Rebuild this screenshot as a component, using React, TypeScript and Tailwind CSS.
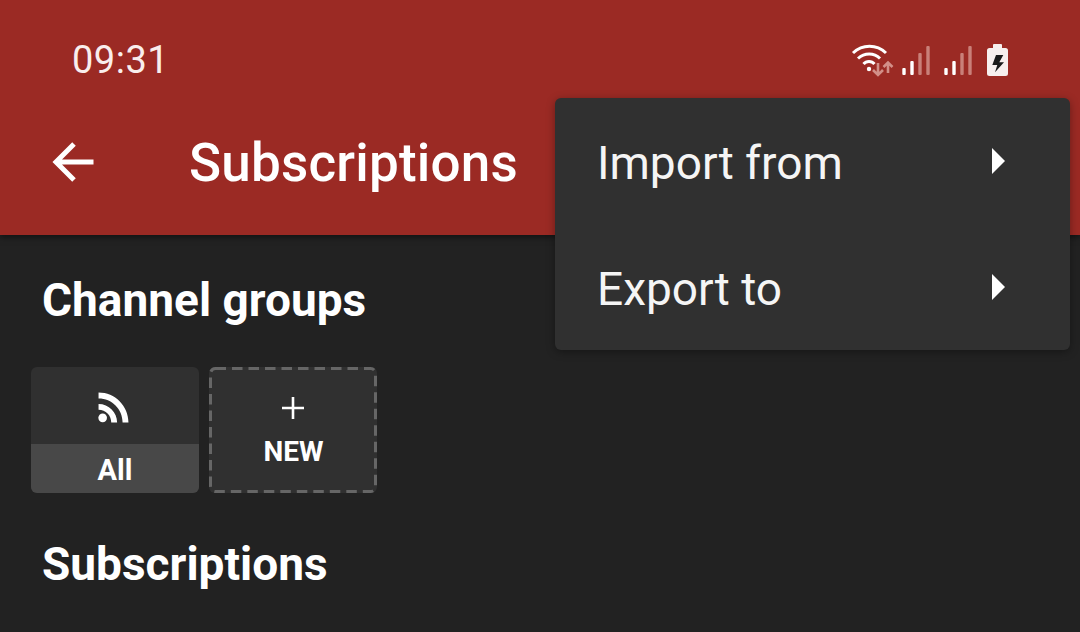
const font = "font-['Roboto',sans-serif]";

function BackArrow() {
  return (
    <svg width="44" height="42" viewBox="0 0 44 42" fill="none" stroke="#fff" strokeWidth="5">
      <path d="M42.500 20H5M23 2 5 20l18 18" />
    </svg>
  );
}

function StatusIcons() {
  return (
    <svg width="160" height="40" viewBox="0 0 160 40" fill="none">
      {/* wifi */}
      <g stroke="#fff" strokeWidth="3" fill="none">
        <path d="M3 14C12.500 5 26.500 5 36 14" />
        <path d="M8 19.500C14.500 13.500 24 13.500 30 19.500" />
        <path d="M13.500 25C16.500 21.500 21.500 21.500 24.500 25" />
      </g>
      <circle cx="19" cy="30" r="2.200" fill="#fff" />
      {/* data arrows */}
      <g stroke="#d28f88" strokeWidth="2.600" fill="none">
        <path d="M28 24v12M23 31l5 5 5-5" />
        <path d="M38 34V23.500M33.500 28l4.500-4.500 4.500 4.500" />
      </g>
      {/* signal 1 */}
      <rect x="52.300" y="29" width="3.400" height="7" rx="1" fill="#fff" />
      <rect x="60.300" y="22" width="3.400" height="14" rx="1" fill="#fff" />
      <rect x="68.300" y="14" width="3.400" height="22" rx="1" fill="#c98079" />
      <rect x="76.300" y="7" width="3.400" height="29" rx="1" fill="#c98079" />
      {/* signal 2 */}
      <rect x="94.300" y="29" width="3.400" height="7" rx="1" fill="#fff" />
      <rect x="102.300" y="22" width="3.400" height="14" rx="1" fill="#fff" />
      <rect x="110.300" y="14" width="3.400" height="22" rx="1" fill="#c98079" />
      <rect x="118.300" y="7" width="3.400" height="29" rx="1" fill="#c98079" />
      {/* battery */}
      <path d="M144 5h7a1 1 0 0 1 1 1v3h3.500a2.500 2.500 0 0 1 2.500 2.500V34.500a2.500 2.500 0 0 1-2.500 2.500h-16a2.500 2.500 0 0 1-2.500-2.500V11.500a2.500 2.500 0 0 1 2.500-2.500h3.500V6a1 1 0 0 1 1-1z" fill="#f7efee" />
      <path d="M146 16h7.300l-4 7.300H154L145 33.300l2.300-7.300h-5z" fill="#1a1a1a" />
    </svg>
  );
}

function Rss() {
  return (
    <svg width="33" height="33" viewBox="0 0 32 32" fill="#fff">
      <circle cx="5.500" cy="26" r="4.200" />
      <path d="M1.500 12.500v5.600c7 0 12.300 5.400 12.300 12.400h5.700c0-10-8-18-18-18z" />
      <path d="M1.500 1.500v5.700c13 0 23.300 10.300 23.300 23.300h5.700C30.500 14.500 17.500 1.500 1.500 1.500z" />
    </svg>
  );
}

function MenuItem({ label }: { label: string }) {
  return (
    <div className="flex h-[126px] items-center justify-between pl-[42px] pr-[65px]">
      <span className="pt-1 text-[46px] leading-none text-[#f5f5f5]">{label}</span>
      <span className="h-0 w-0 border-y-[13px] border-l-[13px] border-y-transparent border-l-white" />
    </div>
  );
}

export default function App() {
  return (
    <div className={`relative h-[632px] w-[1080px] overflow-hidden bg-[#222222] ${font}`}>
      <header className="h-[235px] bg-[#9b2a24] text-white shadow-[0_2px_6px_rgba(0,0,0,0.5)]">
        <div className="flex h-[98px] items-center justify-between pl-[72px] pr-[70px] pt-5">
          <span className="pt-[2px] text-[38px] leading-none tracking-[0.5px] text-[#f9eeed]">09:31</span>
          <StatusIcons />
        </div>
        <div className="flex h-[137px] items-center pb-[7px] pl-[51px]">
          <BackArrow />
          <h1 className="ml-[94px] text-[53px] font-medium leading-none tracking-[0.2px]">Subscriptions</h1>
        </div>
      </header>

      <main className="px-[31px] text-white">
        <h2 className="ml-[11px] pt-[41px] text-[46px] font-bold leading-[48px]">Channel groups</h2>
        <div className="mt-[43px] flex gap-[10px]">
          <div className="flex h-[126px] w-[168px] flex-col overflow-hidden rounded-[6px] bg-[#303030]">
            <div className="flex flex-1 items-center justify-center pt-1 pr-[3px]">
              <Rss />
            </div>
            <div className="flex h-[49px] items-center justify-center bg-[#484848] pt-1 text-[29px] font-bold">All</div>
          </div>
          <div className="relative flex h-[126px] w-[168px] flex-col items-center rounded-[6px] bg-[#303030] pt-[30px]">
            <svg className="absolute inset-0" width="168" height="126" fill="none">
              <rect x="1.500" y="1.500" width="165" height="123" rx="5" stroke="#666666" strokeWidth="3" strokeDasharray="10.500 6" />
            </svg>
            <svg width="22" height="22" viewBox="0 0 22 22" stroke="#fff" strokeWidth="2.600">
              <path d="M11 0v22M0 11h22" />
            </svg>
            <span className="mt-4 pl-px text-[28px] font-bold leading-[34px]">NEW</span>
          </div>
        </div>
        <h2 className="ml-[11px] mt-[47px] text-[46px] font-bold leading-[48px]">Subscriptions</h2>
      </main>

      <div className="absolute left-[555px] top-[98px] h-[252px] w-[515px] rounded-[6px] bg-[#303030] shadow-[0_2px_8px_rgba(0,0,0,0.35)]">
        <MenuItem label="Import from" />
        <MenuItem label="Export to" />
      </div>
    </div>
  );
}
